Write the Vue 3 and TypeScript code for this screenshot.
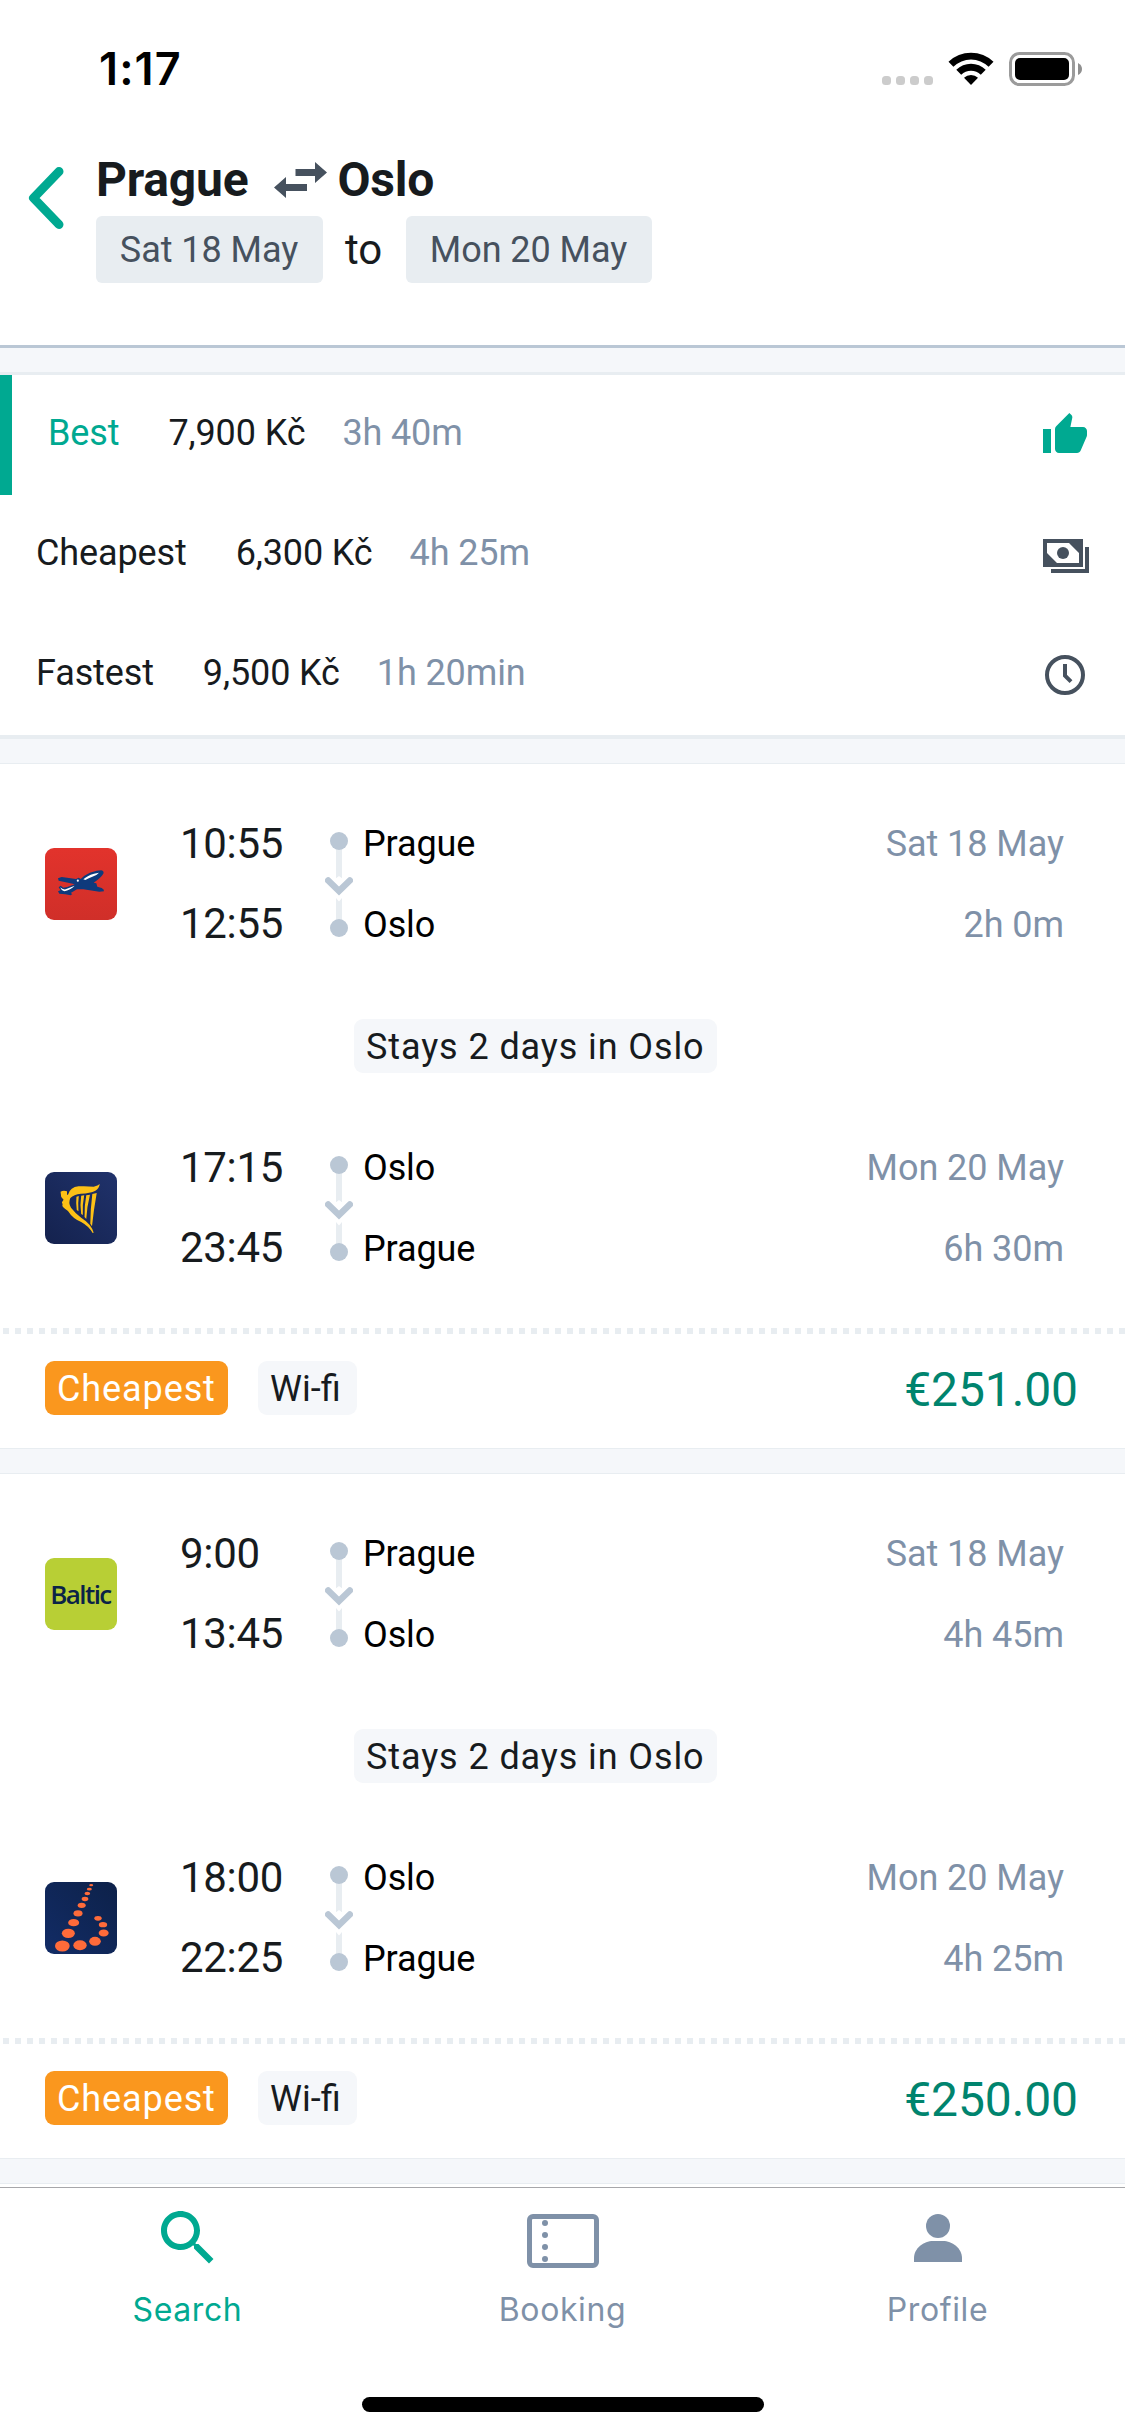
<script setup lang="ts">
type Carrier = 'plane' | 'harp' | 'baltic' | 'dots'

interface Leg {
  carrier: Carrier
  depart: string
  arrive: string
  from: string
  to: string
  date: string
  duration: string
}

interface Itinerary {
  legs: Leg[]
  stay: string
  price: string
}

interface SortOption {
  id: 'best' | 'cheapest' | 'fastest'
  label: string
  price: string
  duration: string
}

const activeSort = 'best'

const sortOptions: SortOption[] = [
  { id: 'best', label: 'Best', price: '7,900 Kč', duration: '3h 40m' },
  { id: 'cheapest', label: 'Cheapest', price: '6,300 Kč', duration: '4h 25m' },
  { id: 'fastest', label: 'Fastest', price: '9,500 Kč', duration: '1h 20min' },
]

const itineraries: Itinerary[] = [
  {
    stay: 'Stays 2 days in Oslo',
    price: '€251.00',
    legs: [
      { carrier: 'plane', depart: '10:55', arrive: '12:55', from: 'Prague', to: 'Oslo', date: 'Sat 18 May', duration: '2h 0m' },
      { carrier: 'harp', depart: '17:15', arrive: '23:45', from: 'Oslo', to: 'Prague', date: 'Mon 20 May', duration: '6h 30m' },
    ],
  },
  {
    stay: 'Stays 2 days in Oslo',
    price: '€250.00',
    legs: [
      { carrier: 'baltic', depart: '9:00', arrive: '13:45', from: 'Prague', to: 'Oslo', date: 'Sat 18 May', duration: '4h 45m' },
      { carrier: 'dots', depart: '18:00', arrive: '22:25', from: 'Oslo', to: 'Prague', date: 'Mon 20 May', duration: '4h 25m' },
    ],
  },
]

// cx, cy, rx, ry
const logoDots: number[][] = [
  [97, 192, 22, 16.5], [150, 190, 20, 15], [195, 178, 17.5, 13.5], [221, 153, 15, 10.5],
  [219, 128, 12.5, 8], [204, 109, 11, 7], [115, 154, 19.5, 14], [131, 122, 16.5, 11],
  [144, 94, 13.5, 9.5], [155, 70, 12, 8], [165, 51, 10, 6.5], [172, 34.5, 8.5, 5],
  [178, 21.5, 7.5, 4], [183.5, 9.5, 6, 3.2],
]
</script>

<template>
  <div class="screen">
    <div class="status">
      <span class="clock">1:17</span>
      <div class="indicators">
        <div class="signal"><i v-for="n in 4" :key="n"></i></div>
        <svg class="wifi" width="46" height="33" viewBox="0 0 46 33">
          <path d="M0.5 9.8 A32.5 32.5 0 0 1 45.5 9.8 L40.6 14.8 A25 25 0 0 0 5.4 14.8Z" />
          <path d="M8.3 17.8 A21 21 0 0 1 37.7 17.8 L32.8 22.8 A14 14 0 0 0 13.2 22.8Z" />
          <path d="M16 25.8 A10.2 10.2 0 0 1 30 25.8 L23 33Z" />
        </svg>
        <svg class="battery" width="74" height="34" viewBox="0 0 74 34">
          <rect x="1.5" y="1.5" width="63" height="31" rx="9" fill="none" stroke="#9b9b9b" stroke-width="3" />
          <rect x="6" y="6" width="54" height="22" rx="5" />
          <path d="M69 11 Q73 13 73 17 Q73 21 69 23Z" fill="#8f8f8f" />
        </svg>
      </div>
    </div>

    <header class="header">
      <svg class="back" width="36" height="64" viewBox="0 0 36 64">
        <path d="M31 5.500 L5.500 32 L31 58.500" fill="none" stroke="#00a991" stroke-width="9" stroke-linecap="round" stroke-linejoin="round" />
      </svg>
      <div class="trip">
        <div class="title">
          <span class="city">Prague</span>
          <svg class="swap" width="54" height="36" viewBox="0 0 54 36">
            <path d="M21.5 7H41V0L53 10.5L41 21V14H21.5ZM33 22H12V15L0 25.5L12 36V29H33Z" fill="#46515e" />
          </svg>
          <span class="city">Oslo</span>
        </div>
        <div class="dates">
          <span class="date-chip depart">Sat 18 May</span>
          <span class="to">to</span>
          <span class="date-chip return">Mon 20 May</span>
        </div>
      </div>
    </header>

    <main class="content">
      <section class="sorting">
        <div v-for="o in sortOptions" :key="o.id" class="sort" :class="{ active: o.id === activeSort }">
          <span class="sort-label">{{ o.label }}</span>
          <span class="sort-price">{{ o.price }}</span>
          <span class="sort-duration">{{ o.duration }}</span>
          <svg class="sort-icon" width="48" height="48" viewBox="0 0 24 24">
            <path v-if="o.id === 'best'" d="M1 21h4V9H1v12zm22-11c0-1.100-.9-2-2-2h-6.310l.95-4.570.03-.32c0-.41-.17-.79-.44-1.060L14.170 1 7.590 7.590C7.220 7.950 7 8.450 7 9v10c0 1.100.9 2 2 2h9c.83 0 1.540-.5 1.840-1.220l3.020-7.050c.09-.23.14-.47.14-.73v-2z" fill="#00a991" />
            <g v-else-if="o.id === 'cheapest'" fill="#46515e">
              <path fill-rule="evenodd" d="M1 4H21V18H1ZM3 6V11L8 16H19V11L14 6Z" />
              <circle cx="11" cy="11" r="3" />
              <path d="M22 8H24V21H5V19H22Z" />
            </g>
            <g v-else fill="none" stroke="#46515e" stroke-width="2">
              <circle cx="12" cy="12" r="9" />
              <path d="M12 6.500V12.300L15 15.300" />
            </g>
          </svg>
        </div>
      </section>

      <article v-for="(it, i) in itineraries" :key="i" class="card">
        <div class="route">
          <template v-for="(leg, j) in it.legs" :key="j">
            <div v-if="j > 0" class="stay"><span class="tag">{{ it.stay }}</span></div>
            <div class="leg">
              <div class="logo">
                <svg v-if="leg.carrier === 'plane'" width="72" height="72" viewBox="45 54 216 216">
                  <defs>
                    <linearGradient id="red" x1="0" y1="0" x2="0" y2="1">
                      <stop offset="0" stop-color="#e2332c" /><stop offset="1" stop-color="#d02f29" />
                    </linearGradient>
                  </defs>
                  <rect x="45" y="54" width="216" height="216" fill="url(#red)" />
                  <path d="M84 145 L95 141 L138 147 L146 143 L152 147 L163 137 Q178 126 200 122 L214 121 Q223 124 220 131 Q213 143 191 158 L199 160 L202 170 L215 174 Q223 178 222 184 L208 185 L160 178 L141 178 L122 189 L127 192 L122 196 L106 193 L88 191 L84 184 L92 181 L86 172 L92 167 L100 173 L112 171 L134 163 L118 159 L86 152Z" fill="#0e3a7c" />
                  <path d="M160 148 Q171 137 192 131 L207 128 Q202 135 187 140 Q173 145 166 150Z M91 172 Q96 179 107 178 L134 167 Q124 178 104 184 Q94 182 91 172Z" fill="#fff" />
                  <circle cx="143.500" cy="152" r="3.200" fill="#fff" />
                </svg>
                <svg v-else-if="leg.carrier === 'harp'" width="72" height="72" viewBox="44 66 213 216" preserveAspectRatio="none">
                  <defs>
                    <linearGradient id="navy" x1="1" y1="0" x2="0" y2="1">
                      <stop offset="0" stop-color="#20326b" /><stop offset="1" stop-color="#14224e" />
                    </linearGradient>
                  </defs>
                  <rect x="44" y="66" width="213" height="216" fill="url(#navy)" />
                  <path d="M90 125 Q99 120 109 124 L109 134 L112 134 Q119 111 143 109 Q168 108 188 110 Q201 107 206 102 Q204 116 193 122 Q178 130 150 131 Q129 133 119 144 Q112 159 121 173 Q132 188 151 203 Q181 222 188 248 L185 249 Q174 229 151 216 Q126 206 112 183 L103 176 Q93 170 96 163 L94 157 L99 149 L92 141Z" fill="#fdc116" />
                  <g fill="#fdc116">
                    <path d="M137 140L144 138Q141 160 143 184L138 180Q135 160 137 140Z" />
                    <path d="M151 137L160 136Q154 165 156 195L151 192Q147 165 151 137Z" />
                    <path d="M166 136L177 134Q168 170 166 207L161 201Q160 170 166 136Z" />
                    <path d="M184 132L197 129Q188 180 183 229L178 221Q178 180 184 132Z" />
                  </g>
                </svg>
                <div v-else-if="leg.carrier === 'baltic'" class="baltic">Baltic</div>
                <svg v-else width="72" height="72" viewBox="45 0 216 216">
                  <defs>
                    <linearGradient id="deep" x1="1" y1="0" x2="0" y2="1">
                      <stop offset="0" stop-color="#0d2149" /><stop offset="1" stop-color="#122c66" />
                    </linearGradient>
                  </defs>
                  <rect x="45" y="0" width="216" height="216" fill="url(#deep)" />
                  <ellipse v-for="(d, k) in logoDots" :key="k" :cx="d[0]" :cy="d[1]" :rx="d[2]" :ry="d[3]" fill="#ff6b3a" />
                </svg>
              </div>
              <div class="times"><span>{{ leg.depart }}</span><span>{{ leg.arrive }}</span></div>
              <svg class="path" width="28" height="105" viewBox="0 0 28 105">
                <path d="M14 12V47M14 66V94" stroke="#e8edf1" stroke-width="6" />
                <path d="M10 47 L14 44 L18 47Z M11 66 L14 69.500 L17 66Z" fill="#fff" />
                <circle cx="14" cy="9" r="9" fill="#bac7d5" />
                <circle cx="14" cy="96" r="9" fill="#bac7d5" />
                <path d="M3.200 48.500L14 59L24.800 48.500" fill="none" stroke="#bac7d5" stroke-width="6.500" stroke-linecap="round" />
              </svg>
              <div class="places"><span>{{ leg.from }}</span><span>{{ leg.to }}</span></div>
              <div class="meta"><span>{{ leg.date }}</span><span>{{ leg.duration }}</span></div>
            </div>
          </template>
        </div>
        <div class="dotted"></div>
        <footer class="summary">
          <span class="tag cheapest">Cheapest</span>
          <span class="tag wifi-tag">Wi-fi</span>
          <span class="price">{{ it.price }}</span>
        </footer>
      </article>
      <article class="card"></article>
    </main>

    <nav class="tabs">
      <div class="tab active">
        <div class="tab-icon">
          <svg width="72" height="72" viewBox="0 0 24 24" fill="#00a991">
            <path d="M15.500 14h-.79l-.28-.27C15.410 12.590 16 11.110 16 9.500 16 5.910 13.090 3 9.500 3S3 5.910 3 9.500 5.910 16 9.500 16c1.610 0 3.090-.59 4.230-1.570l.27.28v.79l5 4.990L20.490 19l-4.990-5zm-6 0C7.010 14 5 11.990 5 9.500S7.010 5 9.500 5 14 7.010 14 9.500 11.990 14 9.500 14z" />
          </svg>
        </div>
        <span class="tab-label">Search</span>
      </div>
      <div class="tab">
        <div class="tab-icon">
          <svg width="72" height="72" viewBox="0 0 72 72">
            <rect x="2.500" y="14.500" width="67" height="49" rx="3.500" fill="none" stroke="#7f91a8" stroke-width="5" />
            <g fill="#7f91a8">
              <circle cx="18" cy="21" r="3" /><circle cx="18" cy="33" r="3" />
              <circle cx="18" cy="45" r="3" /><circle cx="18" cy="57" r="3" />
            </g>
          </svg>
        </div>
        <span class="tab-label">Booking</span>
      </div>
      <div class="tab">
        <div class="tab-icon">
          <svg width="72" height="72" viewBox="0 0 72 72" fill="#7f91a8">
            <circle cx="36" cy="24" r="12" />
            <path d="M12 60V56C12 46 22 39 31 39H41C50 39 60 46 60 56V60Z" />
          </svg>
        </div>
        <span class="tab-label">Profile</span>
      </div>
    </nav>
    <div class="home"><div class="home-bar"></div></div>
  </div>
</template>

<style>
html,
body {
  margin: 0;
  background: #fff;
}
</style>

<style scoped>
.screen {
  width: 1125px;
  height: 2436px;
  display: flex;
  flex-direction: column;
  overflow: hidden;
  background: #fff;
  font-family: Roboto, "Noto Sans", sans-serif;
  font-size: 36px;
  letter-spacing: -0.12px;
  color: #171b1e;
}

.screen * {
  box-sizing: border-box;
}

svg {
  display: block;
  flex: none;
}

.status {
  height: 144px;
  flex: none;
  display: flex;
  justify-content: space-between;
  align-items: flex-start;
  padding: 52px 42px 0 99px;
}

.clock {
  font-family: Inter, sans-serif;
  font-weight: 600;
  font-size: 45px;
  line-height: 34px;
  letter-spacing: 1.1px;
  color: #000;
}

.indicators {
  display: flex;
}

.signal {
  display: flex;
  gap: 5px;
  padding-top: 24px;
  margin-right: 15px;
}

.signal i {
  width: 9px;
  height: 9px;
  border-radius: 3.5px;
  background: #ccc;
}

.wifi {
  margin-right: 15px;
}

.header {
  height: 204px;
  flex: none;
  display: flex;
  align-items: flex-start;
  border-bottom: 3px solid #bac7d5;
}

.back {
  margin: 22px 32px 0 28px;
}

.title {
  height: 72px;
  display: flex;
  align-items: center;
}

.city {
  font-size: 48px;
  font-weight: 700;
  line-height: 72px;
  letter-spacing: -0.2px;
}

.swap {
  margin: 0 9px 0 26px;
}

.dates {
  display: flex;
  align-items: center;
}

.date-chip {
  height: 67px;
  line-height: 69px;
  border-radius: 6px;
  background: #e8edf1;
  color: #46515e;
  text-align: center;
  letter-spacing: -0.05px;
}

.depart {
  width: 227px;
  padding-right: 1px;
}

.return {
  width: 246px;
  padding-right: 1px;
}

.to {
  width: 83px;
  padding-right: 2px;
  font-size: 42px;
  line-height: 67px;
  text-align: center;
  color: #171b1e;
}

.content {
  height: 1839px;
  flex: none;
  background: #f5f7fa;
  padding-top: 24px;
  overflow: hidden;
}

.sorting {
  height: 367px;
  border-top: 3px solid #e8edf1;
  border-bottom: 4px solid #e8edf1;
  background: #fff;
}

.sort {
  height: 120px;
  display: flex;
  align-items: center;
  padding: 0 36px;
  line-height: 116px;
}

.sort span {
  height: 120px;
}

.sort.active {
  border-left: 12px solid #00a991;
}

.sort.active .sort-label {
  color: #00a991;
}

.sort-label {
  margin-right: 49px;
}

.sort-price {
  margin-right: 37px;
}

.sort-duration {
  color: #7f91a8;
}

.sort-icon {
  margin-left: auto;
}

.card {
  margin-top: 24px;
  height: 686px;
  background: #fff;
  border-top: 1px solid #e8edf1;
  border-bottom: 1px solid #e8edf1;
}

.route {
  padding: 39px 0;
}

.leg {
  height: 162px;
  display: flex;
  align-items: center;
  padding: 0 61px 0 45px;
}

.logo {
  width: 72px;
  height: 72px;
  border-radius: 9px;
  overflow: hidden;
}

.baltic {
  height: 72px;
  display: flex;
  justify-content: center;
  padding-right: 1px;
  background: #b8cf35;
  color: #0a2347;
  font-family: "Open Sans", "Noto Sans", sans-serif;
  font-weight: 600;
  font-size: 26px;
  line-height: 73px;
  letter-spacing: -1.6px;
}

.times {
  width: 145px;
  margin-left: 63px;
  display: flex;
  flex-direction: column;
  font-size: 42px;
  line-height: 80px;
  letter-spacing: -0.3px;
}

.path {
  margin-right: 10px;
}

.places {
  display: flex;
  flex-direction: column;
  padding-top: 2px;
  line-height: 81px;
  color: #000;
}

.meta {
  margin-left: auto;
  display: flex;
  flex-direction: column;
  padding-top: 2px;
  text-align: right;
  line-height: 81px;
  letter-spacing: -0.05px;
  color: #7f91a8;
}

.stay {
  display: flex;
  padding: 54px 0 54px 354px;
}

.tag {
  height: 54px;
  line-height: 56px;
  padding: 0 12px;
  border-radius: 9px;
  background: #f5f7fa;
  letter-spacing: 0.9px;
  white-space: nowrap;
}

.dotted {
  height: 6px;
  background: repeating-linear-gradient(90deg, #fff 0 3px, #e8edf1 3px 9px, #fff 9px 12px);
}

.summary {
  height: 114px;
  display: flex;
  align-items: flex-start;
  padding: 27px 47px 0 45px;
}

.cheapest {
  width: 183px;
  background: #fa971e;
  color: #fff;
  margin-right: 30px;
}

.wifi-tag {
  width: 99px;
  letter-spacing: 0;
}

.price {
  margin-left: auto;
  font-size: 48px;
  line-height: 57px;
  letter-spacing: -0.1px;
  color: #00846e;
}

.tabs {
  height: 210px;
  flex: none;
  display: flex;
  border-top: 1px solid #a7a7aa;
}

.tab {
  flex: 1;
  display: flex;
  flex-direction: column;
  align-items: center;
  padding-top: 14px;
  color: #7f91a8;
}

.tab.active {
  color: #00a991;
}

.tab-icon {
  height: 72px;
}

.tab-label {
  margin-top: 14px;
  font-family: Inter, sans-serif;
  font-size: 32px;
  line-height: 44px;
  letter-spacing: 0.6px;
}

.home {
  display: flex;
  justify-content: center;
}

.home-bar {
  width: 402px;
  height: 15px;
  border-radius: 8px;
  background: #000;
}
</style>
